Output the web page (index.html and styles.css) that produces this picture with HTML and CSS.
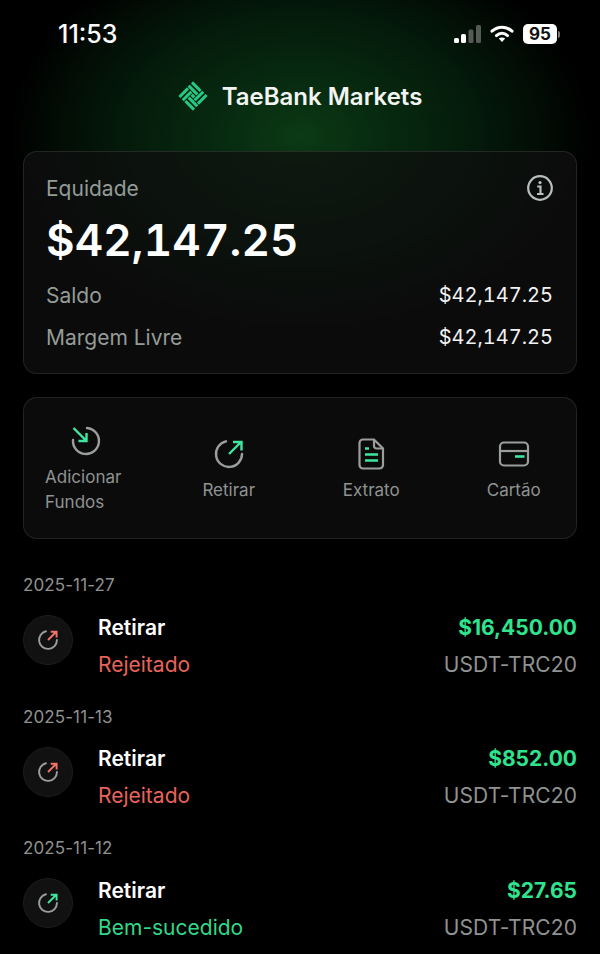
FILE: index.html
```html
<!DOCTYPE html>
<html lang="pt">

<head>
    <meta charset="UTF-8">
    <meta name="viewport" content="width=device-width, initial-scale=1.0">
    <title>TaeBank Markets</title>
    <link rel="stylesheet" href="styles.css">
</head>

<body>
    <div class="screen">
        <div class="status-bar">
            <span class="time">11:53</span>
            <div class="status-icons">
                <svg class="signal" width="27" height="18" viewBox="0 0 27 18">
                    <rect x="0" y="13" width="5" height="5" rx="1.5" fill="#fff"/>
                    <rect x="7" y="9" width="5" height="9" rx="1.5" fill="#fff"/>
                    <rect x="14.5" y="4.5" width="5" height="13.5" rx="1.5" fill="#555a56"/>
                    <rect x="22" y="0" width="5" height="18" rx="1.5" fill="#555a56"/>
                </svg>
                <svg class="wifi" width="24" height="18" viewBox="0 0 24 18" fill="none" stroke="#fff" stroke-linecap="round">
                    <path d="M2 6.2C8 .8 16 .8 22 6.2" stroke-width="3"/>
                    <path d="M6.4 10.6c3.4-3 7.8-3 11.2 0" stroke-width="3"/>
                    <path d="M12 17l-3.2-3.4c1.9-1.5 4.5-1.5 6.4 0z" fill="#fff" stroke="none"/>
                </svg>
                <div class="battery"><span class="battery-level">95</span><span class="battery-cap"></span></div>
            </div>
        </div>

        <header class="brand">
            <svg width="30" height="30" viewBox="0 0 32 32" fill="none" stroke="#25c985" stroke-width="3.2">
                <g transform="rotate(45 16 16)">
                    <path d="M5 6.5H18M5 11.5H18"/>
                    <path d="M5 6.5H18M5 11.5H18" transform="rotate(90 16 16)"/>
                    <path d="M5 6.5H18M5 11.5H18" transform="rotate(180 16 16)"/>
                    <path d="M5 6.5H18M5 11.5H18" transform="rotate(270 16 16)"/>
                    <path d="M14 16h4"/>
                </g>
            </svg>
            <span class="brand-name">TaeBank Markets</span>
        </header>

        <section class="card equity">
            <div class="equity-head">
                <span>Equidade</span>
                <svg class="info" width="28" height="28" viewBox="0 0 28 28" fill="none" stroke="#b9bfbb">
                    <circle cx="14" cy="14" r="11.8" stroke-width="2.2"/>
                    <circle cx="14" cy="8.6" r="1.6" fill="#b9bfbb" stroke="none"/>
                    <path d="M11.2 12.5H14.5V19.5M11 20h6.5" stroke-width="2.2"/>
                </svg>
            </div>
            <div class="equity-value">$42,147.25</div>
            <div class="equity-row"><span>Saldo</span><span class="amount">$42,147.25</span></div>
            <div class="equity-row"><span>Margem Livre</span><span class="amount">$42,147.25</span></div>
        </section>

        <nav class="card actions">
            <a class="action action-wide">
                <svg width="32" height="32" viewBox="0 0 32 32" fill="none" stroke-width="2.4">
                    <path d="M17 3A13 13 0 1 1 3 15" stroke="#9a9f9c" stroke-linecap="round"/>
                    <path d="M3.5 3 16 15.5M16.5 8V16H8.5" stroke="#3ee6a0"/>
                </svg>
                <span>Adicionar<br>Fundos</span>
            </a>
            <a class="action">
                <svg width="32" height="32" viewBox="0 0 32 32" fill="none" stroke-width="2.4">
                    <path d="M13 3.3A13 13 0 1 0 29 16" stroke="#9a9f9c" stroke-linecap="round"/>
                    <path d="M16 16 28 4M20 4H28.5V12.5" stroke="#3ee6a0"/>
                </svg>
                <span>Retirar</span>
            </a>
            <a class="action">
                <svg width="32" height="32" viewBox="0 0 32 32" fill="none" stroke-width="2.2">
                    <path d="M8 1.5h11l9 9V27a3.5 3.5 0 0 1-3.5 3.5h-16.5A3.5 3.5 0 0 1 4.5 27V5A3.5 3.5 0 0 1 8 1.5z" stroke="#9a9f9c"/>
                    <path d="M19 2v6a2.5 2.5 0 0 0 2.5 2.5h6" stroke="#9a9f9c"/>
                    <path d="M10 10.5h4M10 16.5h13M10 22.5h13" stroke="#3ee6a0" stroke-width="2.4"/>
                </svg>
                <span>Extrato</span>
            </a>
            <a class="action">
                <svg width="32" height="32" viewBox="0 0 32 32" fill="none" stroke-width="2.2">
                    <rect x="2" y="4.5" width="28" height="23" rx="4" stroke="#9a9f9c"/>
                    <path d="M2 13h28" stroke="#9a9f9c"/>
                    <path d="M17 18.5h9.5" stroke="#3ee6a0" stroke-width="2.6"/>
                </svg>
                <span>Cartão</span>
            </a>
        </nav>

        <section class="history">
            <div class="tx-group">
                <div class="tx-date">2025-11-27</div>
                <div class="tx">
                    <div class="tx-icon">
                        <svg width="22" height="22" viewBox="0 0 32 32" fill="none" stroke-width="2.8">
                            <path d="M13 3.3A13 13 0 1 0 29 16" stroke="#9a9f9c" stroke-linecap="round"/>
                            <path d="M16 16 28 4M20 4H28.5V12.5" stroke="#f0746a"/>
                        </svg>
                    </div>
                    <div class="tx-main">
                        <span class="tx-type">Retirar</span>
                        <span class="tx-status rejected">Rejeitado</span>
                    </div>
                    <div class="tx-side">
                        <span class="tx-amount">$16,450.00</span>
                        <span class="tx-network">USDT-TRC20</span>
                    </div>
                </div>
            </div>

            <div class="tx-group">
                <div class="tx-date">2025-11-13</div>
                <div class="tx">
                    <div class="tx-icon">
                        <svg width="22" height="22" viewBox="0 0 32 32" fill="none" stroke-width="2.8">
                            <path d="M13 3.3A13 13 0 1 0 29 16" stroke="#9a9f9c" stroke-linecap="round"/>
                            <path d="M16 16 28 4M20 4H28.5V12.5" stroke="#f0746a"/>
                        </svg>
                    </div>
                    <div class="tx-main">
                        <span class="tx-type">Retirar</span>
                        <span class="tx-status rejected">Rejeitado</span>
                    </div>
                    <div class="tx-side">
                        <span class="tx-amount">$852.00</span>
                        <span class="tx-network">USDT-TRC20</span>
                    </div>
                </div>
            </div>

            <div class="tx-group">
                <div class="tx-date">2025-11-12</div>
                <div class="tx">
                    <div class="tx-icon">
                        <svg width="22" height="22" viewBox="0 0 32 32" fill="none" stroke-width="2.8">
                            <path d="M13 3.3A13 13 0 1 0 29 16" stroke="#9a9f9c" stroke-linecap="round"/>
                            <path d="M16 16 28 4M20 4H28.5V12.5" stroke="#3ee6a0"/>
                        </svg>
                    </div>
                    <div class="tx-main">
                        <span class="tx-type">Retirar</span>
                        <span class="tx-status success">Bem-sucedido</span>
                    </div>
                    <div class="tx-side">
                        <span class="tx-amount">$27.65</span>
                        <span class="tx-network">USDT-TRC20</span>
                    </div>
                </div>
            </div>
        </section>
    </div>
</body>

</html>
```

FILE: styles.css
```css
* {
    box-sizing: border-box;
}

html, body {
    margin: 0;
    height: 100%;
    background: #000;
}

body {
    font-family: Inter, "Noto Sans", sans-serif;
    color: #fff;
    overflow: hidden;
}

.screen {
    height: 954px;
    padding: 0 23px;
    background: radial-gradient(ellipse 290px 200px at 300px 135px, #0b3a15 0%, #072a10 28%, #041c0b 58%, #020c05 84%, #000 100%);
}

.status-bar {
    height: 66px;
    padding: 2px 17px 0 35px;
    display: flex;
    justify-content: space-between;
    align-items: center;
}

.time {
    font-size: 25px;
    font-weight: 500;
}

.status-icons {
    display: flex;
    align-items: center;
    gap: 9px;
}

.battery {
    display: flex;
    align-items: center;
    gap: 1px;
}

.battery-level {
    width: 34px;
    height: 20px;
    border-radius: 5px;
    background: #fff;
    color: #111;
    font-size: 17px;
    font-weight: 700;
    line-height: 20px;
    text-align: center;
}

.battery-cap {
    width: 2px;
    height: 7px;
    border-radius: 0 2px 2px 0;
    background: #777;
}

.brand {
    height: 60px;
    display: flex;
    justify-content: center;
    align-items: center;
    gap: 14px;
}

.brand-name {
    font-size: 24px;
    font-weight: 600;
    color: #f1f4f1;
}

.card {
    border: 1px solid rgba(255, 255, 255, 0.1);
    border-radius: 14px;
    background: rgba(15, 15, 15, 0.74);
}

.equity {
    margin-top: 25px;
    height: 223px;
    padding: 20px 23px 0 22px;
}

.equity-head {
    display: flex;
    justify-content: space-between;
    align-items: center;
    height: 32px;
    font-size: 21px;
    color: #949c98;
}

.info {
    margin-right: -1px;
}

.equity-value {
    margin-top: 9px;
    font-size: 44px;
    line-height: 54px;
    font-weight: 600;
    letter-spacing: 0.1px;
    font-variant-numeric: tabular-nums;
}

.equity-row {
    display: flex;
    justify-content: space-between;
    align-items: center;
    height: 42px;
    font-size: 21px;
    color: #949c98;
}

.equity-value + .equity-row {
    margin-top: 7px;
}

.amount {
    font-size: 20px;
    font-variant-numeric: tabular-nums;
    color: #f2f2f2;
}

.actions {
    margin-top: 23px;
    height: 142px;
    padding-top: 4px;
    display: grid;
    grid-template-columns: repeat(4, 1fr);
    column-gap: 18px;
    background: #0b0b0c;
}

.action {
    display: flex;
    flex-direction: column;
    align-items: center;
    justify-content: center;
    gap: 8px;
    font-size: 17px;
    line-height: 25px;
    color: #8f9391;
}

.action-wide span {
    margin-right: 6px;
}

.history {
    padding-top: 32px;
}

.tx-group {
    height: 131.5px;
}

.tx-date {
    font-size: 17px;
    line-height: 28px;
    letter-spacing: 0.1px;
    color: #8f9290;
}

.tx {
    margin-top: 13.5px;
    display: flex;
    align-items: flex-start;
}

.tx-icon {
    width: 50px;
    height: 50px;
    margin-top: 2.5px;
    margin-right: 25px;
    border-radius: 50%;
    border: 1px solid #1c1c1c;
    background: #111;
    display: flex;
    align-items: center;
    justify-content: center;
}

.tx-main, .tx-side {
    display: flex;
    flex-direction: column;
    gap: 8px;
    font-size: 21px;
    line-height: 29px;
}

.tx-main {
    flex: 1;
}

.tx-side {
    align-items: flex-end;
}

.tx-type {
    font-weight: 600;
}

.tx-status.rejected {
    color: #e8645a;
}

.tx-status.success {
    color: #2fd98a;
}

.tx-amount {
    font-weight: 700;
    color: #2fe38f;
}

.tx-network {
    letter-spacing: 0.1px;
    color: #8f9391;
}
```
